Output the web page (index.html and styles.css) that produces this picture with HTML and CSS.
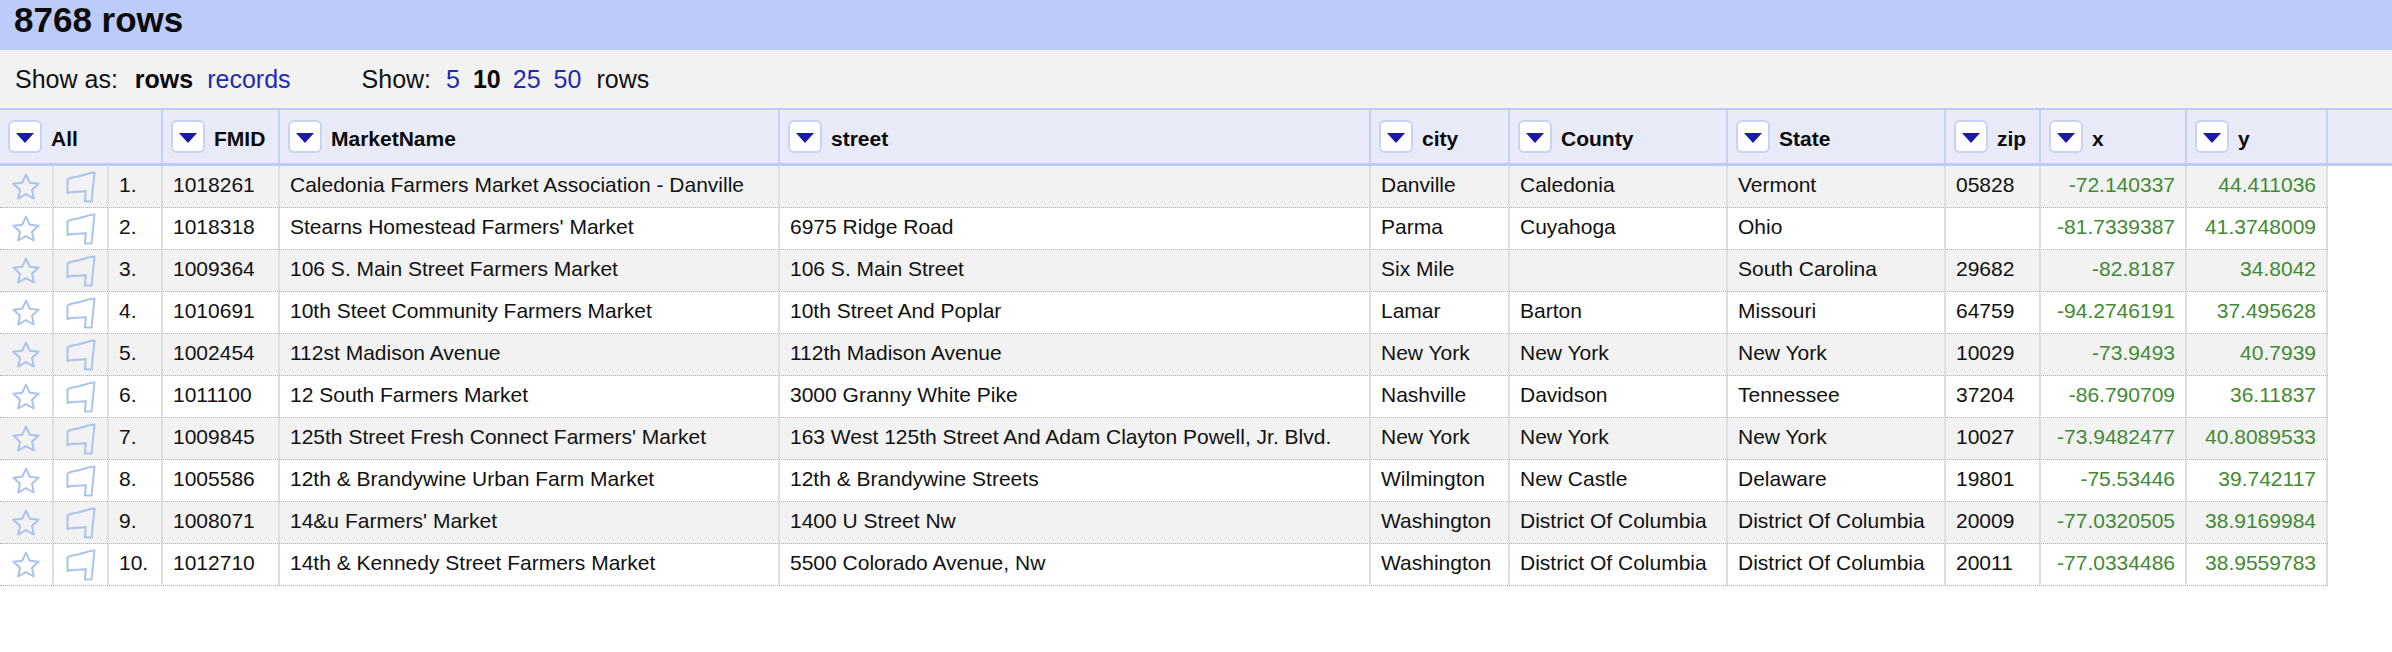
FILE: index.html
```html
<!DOCTYPE html>
<html>
<head>
<meta charset="utf-8">
<link rel="stylesheet" href="styles.css">
</head>
<body>
<svg class="defs" width="0" height="0">
  <symbol id="star" viewBox="0 0 28 28">
    <path d="M14 1.6 L17.7 9.7 L26.6 10.7 L20 16.7 L21.8 25.5 L14 21.1 L6.2 25.5 L8 16.7 L1.4 10.7 L10.3 9.7 Z" fill="none" stroke="#aac3ee" stroke-width="2" stroke-linejoin="round"/>
  </symbol>
  <symbol id="flag" viewBox="0 0 32 34">
    <path d="M2.5 9.5 C6 6.5 10 7.5 15 6 C20 4.5 25 2.5 29.5 2.5 L26.5 31.5 L20 31.5 L20.8 21 C14.5 22.5 8.5 20.5 2.5 23 Z" fill="none" stroke="#aac3ee" stroke-width="2" stroke-linejoin="round"/>
  </symbol>
</svg>

<div class="summary">8768 rows</div>

<div class="viewbar">
  <span class="txt">Show as:</span>
  <b class="cur m1">rows</b>
  <span class="lnk m2">records</span>
  <span class="txt m3">Show:</span>
  <span class="lnk m4">5</span>
  <b class="cur m5">10</b>
  <span class="lnk m6">25</span>
  <span class="lnk m7">50</span>
  <span class="txt m8">rows</span>
</div>

<div class="table">
  <div class="hrow">
    <div class="hc span3"><span class="dd"></span><span class="hl">All</span></div>
    <div class="hc"><span class="dd"></span><span class="hl">FMID</span></div>
    <div class="hc"><span class="dd"></span><span class="hl">MarketName</span></div>
    <div class="hc"><span class="dd"></span><span class="hl">street</span></div>
    <div class="hc"><span class="dd"></span><span class="hl">city</span></div>
    <div class="hc"><span class="dd"></span><span class="hl">County</span></div>
    <div class="hc"><span class="dd"></span><span class="hl">State</span></div>
    <div class="hc"><span class="dd"></span><span class="hl">zip</span></div>
    <div class="hc"><span class="dd"></span><span class="hl">x</span></div>
    <div class="hc"><span class="dd"></span><span class="hl">y</span></div>
    <div class="hc fill"></div>
  </div>

  <div class="row odd">
    <div class="c ic"><svg class="star"><use href="#star"/></svg></div>
    <div class="c ic"><svg class="flag"><use href="#flag"/></svg></div>
    <div class="c">1.</div>
    <div class="c">1018261</div>
    <div class="c">Caledonia Farmers Market Association - Danville</div>
    <div class="c"></div>
    <div class="c">Danville</div>
    <div class="c">Caledonia</div>
    <div class="c">Vermont</div>
    <div class="c">05828</div>
    <div class="c num">-72.140337</div>
    <div class="c num">44.411036</div>
  </div>

  <div class="row">
    <div class="c ic"><svg class="star"><use href="#star"/></svg></div>
    <div class="c ic"><svg class="flag"><use href="#flag"/></svg></div>
    <div class="c">2.</div>
    <div class="c">1018318</div>
    <div class="c">Stearns Homestead Farmers' Market</div>
    <div class="c">6975 Ridge Road</div>
    <div class="c">Parma</div>
    <div class="c">Cuyahoga</div>
    <div class="c">Ohio</div>
    <div class="c"></div>
    <div class="c num">-81.7339387</div>
    <div class="c num">41.3748009</div>
  </div>

  <div class="row odd">
    <div class="c ic"><svg class="star"><use href="#star"/></svg></div>
    <div class="c ic"><svg class="flag"><use href="#flag"/></svg></div>
    <div class="c">3.</div>
    <div class="c">1009364</div>
    <div class="c">106 S. Main Street Farmers Market</div>
    <div class="c">106 S. Main Street</div>
    <div class="c">Six Mile</div>
    <div class="c"></div>
    <div class="c">South Carolina</div>
    <div class="c">29682</div>
    <div class="c num">-82.8187</div>
    <div class="c num">34.8042</div>
  </div>

  <div class="row">
    <div class="c ic"><svg class="star"><use href="#star"/></svg></div>
    <div class="c ic"><svg class="flag"><use href="#flag"/></svg></div>
    <div class="c">4.</div>
    <div class="c">1010691</div>
    <div class="c">10th Steet Community Farmers Market</div>
    <div class="c">10th Street And Poplar</div>
    <div class="c">Lamar</div>
    <div class="c">Barton</div>
    <div class="c">Missouri</div>
    <div class="c">64759</div>
    <div class="c num">-94.2746191</div>
    <div class="c num">37.495628</div>
  </div>

  <div class="row odd">
    <div class="c ic"><svg class="star"><use href="#star"/></svg></div>
    <div class="c ic"><svg class="flag"><use href="#flag"/></svg></div>
    <div class="c">5.</div>
    <div class="c">1002454</div>
    <div class="c">112st Madison Avenue</div>
    <div class="c">112th Madison Avenue</div>
    <div class="c">New York</div>
    <div class="c">New York</div>
    <div class="c">New York</div>
    <div class="c">10029</div>
    <div class="c num">-73.9493</div>
    <div class="c num">40.7939</div>
  </div>

  <div class="row">
    <div class="c ic"><svg class="star"><use href="#star"/></svg></div>
    <div class="c ic"><svg class="flag"><use href="#flag"/></svg></div>
    <div class="c">6.</div>
    <div class="c">1011100</div>
    <div class="c">12 South Farmers Market</div>
    <div class="c">3000 Granny White Pike</div>
    <div class="c">Nashville</div>
    <div class="c">Davidson</div>
    <div class="c">Tennessee</div>
    <div class="c">37204</div>
    <div class="c num">-86.790709</div>
    <div class="c num">36.11837</div>
  </div>

  <div class="row odd">
    <div class="c ic"><svg class="star"><use href="#star"/></svg></div>
    <div class="c ic"><svg class="flag"><use href="#flag"/></svg></div>
    <div class="c">7.</div>
    <div class="c">1009845</div>
    <div class="c">125th Street Fresh Connect Farmers' Market</div>
    <div class="c">163 West 125th Street And Adam Clayton Powell, Jr. Blvd.</div>
    <div class="c">New York</div>
    <div class="c">New York</div>
    <div class="c">New York</div>
    <div class="c">10027</div>
    <div class="c num">-73.9482477</div>
    <div class="c num">40.8089533</div>
  </div>

  <div class="row">
    <div class="c ic"><svg class="star"><use href="#star"/></svg></div>
    <div class="c ic"><svg class="flag"><use href="#flag"/></svg></div>
    <div class="c">8.</div>
    <div class="c">1005586</div>
    <div class="c">12th &amp; Brandywine Urban Farm Market</div>
    <div class="c">12th &amp; Brandywine Streets</div>
    <div class="c">Wilmington</div>
    <div class="c">New Castle</div>
    <div class="c">Delaware</div>
    <div class="c">19801</div>
    <div class="c num">-75.53446</div>
    <div class="c num">39.742117</div>
  </div>

  <div class="row odd">
    <div class="c ic"><svg class="star"><use href="#star"/></svg></div>
    <div class="c ic"><svg class="flag"><use href="#flag"/></svg></div>
    <div class="c">9.</div>
    <div class="c">1008071</div>
    <div class="c">14&amp;u Farmers' Market</div>
    <div class="c">1400 U Street Nw</div>
    <div class="c">Washington</div>
    <div class="c">District Of Columbia</div>
    <div class="c">District Of Columbia</div>
    <div class="c">20009</div>
    <div class="c num">-77.0320505</div>
    <div class="c num">38.9169984</div>
  </div>

  <div class="row">
    <div class="c ic"><svg class="star"><use href="#star"/></svg></div>
    <div class="c ic"><svg class="flag"><use href="#flag"/></svg></div>
    <div class="c">10.</div>
    <div class="c">1012710</div>
    <div class="c">14th &amp; Kennedy Street Farmers Market</div>
    <div class="c">5500 Colorado Avenue, Nw</div>
    <div class="c">Washington</div>
    <div class="c">District Of Columbia</div>
    <div class="c">District Of Columbia</div>
    <div class="c">20011</div>
    <div class="c num">-77.0334486</div>
    <div class="c num">38.9559783</div>
  </div>
</div>
</body>
</html>
```

FILE: styles.css
```css
html, body {
  margin: 0;
  padding: 0;
  background: #fff;
}

body {
  font-family: "Liberation Sans", Arial, Helvetica, sans-serif;
  color: #111;
}

.defs {
  position: absolute;
  width: 0;
  height: 0;
  overflow: hidden;
}

.summary {
  height: 50px;
  box-sizing: border-box;
  background: #bdcbf8;
  font-size: 35px;
  font-weight: bold;
  line-height: 40px;
  padding-left: 14px;
  color: #0a0a0a;
}

.viewbar {
  height: 58px;
  box-sizing: border-box;
  background: #f2f2f2;
  display: flex;
  align-items: center;
  padding-left: 15px;
  font-size: 25px;
  white-space: nowrap;
}

.viewbar .cur {
  font-weight: bold;
  color: #0a0a0a;
}

.viewbar .lnk {
  color: #1d2bb0;
}

.m1 { margin-left: 17px; }
.m2 { margin-left: 14px; }
.m3 { margin-left: 71px; }
.m4 { margin-left: 15px; }
.m5 { margin-left: 13px; }
.m6 { margin-left: 12px; }
.m7 { margin-left: 13px; }
.m8 { margin-left: 15px; }

.hrow {
  display: grid;
  grid-template-columns: 54px 55px 54px 117px 500px 591px 139px 218px 218px 95px 146px 141px 1fr;
  height: 58px;
  box-sizing: border-box;
  background: #e8ebf7;
  border-top: 2px solid #bccbf5;
  border-bottom: 3px solid #bccbf5;
}

.hc {
  display: flex;
  align-items: center;
  gap: 9px;
  padding-left: 8px;
  border-right: 2px solid #c5d0f4;
  font-size: 21px;
  font-weight: bold;
  color: #0a0a0a;
  white-space: nowrap;
  min-width: 0;
}

.hc.span3 {
  grid-column: span 3;
}

.hc.fill {
  border-right: none;
}

.hl {
  padding-top: 4px;
}

.dd {
  flex: none;
  width: 34px;
  height: 33px;
  box-sizing: border-box;
  border: 2px solid #c9d2f2;
  border-radius: 6px;
  background: #fff;
  display: flex;
  align-items: center;
  justify-content: center;
}

.dd::before {
  content: "";
  width: 0;
  height: 0;
  border-left: 9px solid transparent;
  border-right: 9px solid transparent;
  border-top: 10px solid #1a1aa8;
  margin-top: 2px;
}

.row {
  display: grid;
  grid-template-columns: 54px 55px 54px 117px 500px 591px 139px 218px 218px 95px 146px 141px;
  width: 2328px;
  height: 42px;
  box-sizing: border-box;
  border-bottom: 1px dotted #b0b0b0;
}

.row.odd {
  background: #f2f2f2;
}

.c {
  display: flex;
  align-items: center;
  box-sizing: border-box;
  padding: 0 10px 3px 10px;
  border-right: 2px solid #dedede;
  font-size: 21px;
  white-space: nowrap;
  min-width: 0;
  color: #111;
}

.c.ic {
  justify-content: center;
  padding: 0;
}

.c.num {
  justify-content: flex-end;
  color: #3f8a32;
}

.star {
  width: 28px;
  height: 28px;
  display: block;
}

.flag {
  width: 32px;
  height: 34px;
  display: block;
}
```
